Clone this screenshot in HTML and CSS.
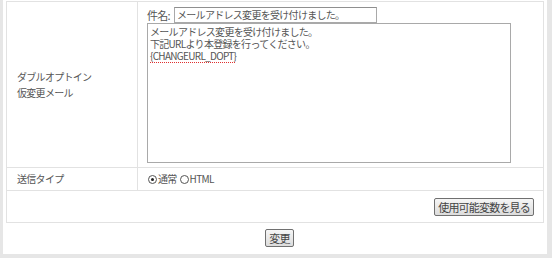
FILE: index.html
```html
<!DOCTYPE html>
<html lang="ja">
<head>
  <meta charset="UTF-8" />
  <link rel="stylesheet" href="styles.css">
</head>
<body>
  <div class="panel">
    <table class="form-table">
      <tr class="row-mail">
        <th>ダブルオプトイン<br>仮変更メール</th>
        <td>
          <div class="subject">
            <span class="subject-label">件名:</span>
            <input type="text" class="subject-input" value="メールアドレス変更を受け付けました。">
          </div>
          <div class="body-box">
            <div class="line">メールアドレス変更を受け付けました。</div>
            <div class="line">下記URLより本登録を行ってください。</div>
            <div class="line"><span class="misspelled">{CHANGEURL_DOPT}</span></div>
          </div>
        </td>
      </tr>
      <tr class="row-type">
        <th>送信タイプ</th>
        <td>
          <div class="radios">
            <label class="radio"><input type="radio" name="type" checked>通常</label>
            <label class="radio"><input type="radio" name="type">HTML</label>
          </div>
        </td>
      </tr>
      <tr class="row-vars">
        <td colspan="2"><button class="btn">使用可能変数を見る</button></td>
      </tr>
    </table>
    <div class="actions">
      <button class="btn">変更</button>
    </div>
  </div>
</body>
</html>
```

FILE: styles.css
```css
:root {
  --bg-gray: #e6e6e6;
  --line: #e2e2e2;
  --text: #555;
  --font-base: "Noto Sans CJK JP", "Liberation Sans", sans-serif;
}
*, *::before, *::after { box-sizing: border-box; }
body {
  margin: 0;
  background: var(--bg-gray);
  font-family: var(--font-base);
  font-size: 10px;
  letter-spacing: -0.7px;
  color: var(--text);
}
.panel {
  background: #fff;
  margin: 0 5px 0 3px;
  padding: 1px 4px 0 3px;
  height: 254px;
}
.form-table {
  width: 538px;
  border-collapse: collapse;
  border: 1px solid var(--line);
}
.form-table th,
.form-table td {
  border: 1px solid var(--line);
  padding: 0;
  font-weight: normal;
  text-align: left;
  vertical-align: middle;
}
.form-table th {
  width: 131px;
  padding-left: 10px;
  line-height: 16px;
}
.row-mail { height: 166px; }
.row-mail td { padding: 4px 0 4px 9px; }
.subject {
  display: flex;
  align-items: center;
  height: 16px;
}
.subject-label {
  flex-shrink: 0;
  width: 27px;
  white-space: nowrap;
  font-size: 11px;
}
.subject-input {
  width: 203px;
  height: 16px;
  margin: 0;
  padding: 0 2px;
  border: 1px solid #a9a9a9;
  border-top-color: #8f8f8f;
  font-family: var(--font-base);
  font-size: 10px;
  letter-spacing: -0.7px;
  color: #555;
}
.body-box {
  width: 364px;
  height: 140px;
  border: 1px solid #a9a9a9;
  padding: 2px 2px;
  color: #555;
}
.body-box .line {
  height: 12px;
  line-height: 12px;
  white-space: nowrap;
}
.misspelled {
  text-decoration: underline dotted #e03030;
  text-underline-offset: 2px;
}
.row-type { height: 23px; }
.row-type td { padding-left: 10px; }
.radios {
  display: flex;
  align-items: center;
  gap: 3px;
  height: 14px;
}
.radio {
  display: flex;
  align-items: center;
  line-height: 12px;
}
.radio input {
  appearance: none;
  flex-shrink: 0;
  width: 9px;
  height: 9px;
  margin: 0 1px 0 0;
  border: 1px solid #555;
  border-radius: 50%;
  background: #fff;
  display: grid;
  place-items: center;
}
.radio input:checked::after {
  content: "";
  width: 3px;
  height: 3px;
  border-radius: 50%;
  background: #222;
}
.row-vars { height: 32px; }
.row-vars td {
  text-align: right !important;
  padding-right: 9px !important;
}
.btn {
  height: 18px;
  padding: 0 3px;
  border: 1px solid #707070;
  border-radius: 2px;
  background: linear-gradient(#f6f6f6, #dcdcdc);
  font-family: var(--font-base);
  font-size: 11px;
  letter-spacing: -0.8px;
  line-height: 14px;
  color: #444;
}
.actions {
  text-align: center;
  padding: 6px 0 0 10px;
}
```
